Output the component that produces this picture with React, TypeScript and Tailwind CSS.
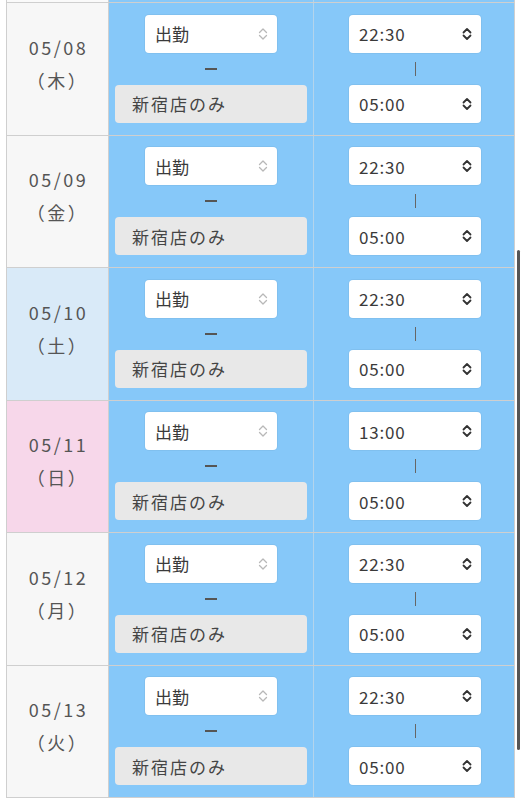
import React from 'react';

type Row = { date: string; dow: string; start: string; end: string; kind?: 'sat' | 'sun' };

const rows: Row[] = [
  { date: '05/08', dow: '木', start: '22:30', end: '05:00' },
  { date: '05/09', dow: '金', start: '22:30', end: '05:00' },
  { date: '05/10', dow: '土', start: '22:30', end: '05:00', kind: 'sat' },
  { date: '05/11', dow: '日', start: '13:00', end: '05:00', kind: 'sun' },
  { date: '05/12', dow: '月', start: '22:30', end: '05:00' },
  { date: '05/13', dow: '火', start: '22:30', end: '05:00' },
];

const Chevrons: React.FC<{ light?: boolean }> = ({ light }) => (
  <svg width="12" height="16" viewBox="0 0 12 16" fill="none" className={light ? 'text-[#b8b8b8]' : 'text-[#333]'}>
    <path d="M2.5 6.5 L6 3 L9.5 6.5" stroke="currentColor" strokeWidth={light ? 1.3 : 1.8} strokeLinecap="round" strokeLinejoin="round" />
    <path d="M2.5 9.5 L6 13 L9.5 9.5" stroke="currentColor" strokeWidth={light ? 1.3 : 1.8} strokeLinecap="round" strokeLinejoin="round" />
  </svg>
);

const SelectBox: React.FC<{ value: string; light?: boolean }> = ({ value, light }) => (
  <div className="w-[132px] h-[38px] bg-white rounded-[4px] flex items-center justify-between pl-[10px] pr-[8px] shadow-[0_0_0_1px_rgba(0,0,0,0.04)]">
    <span className={`text-[17px] text-[#3a3a3a] ${light ? '' : 'tracking-[0.8px]'}`}>{value}</span>
    <Chevrons light={light} />
  </div>
);

export default function App() {
  return (
    <div className="relative w-[525px] h-[800px] overflow-hidden bg-white" style={{ fontFamily: '"Noto Sans CJK JP", "Noto Sans", sans-serif' }}>
      <div className="ml-[6px] w-[509px] border-l border-r border-[#cfcfcf]">
        <div className="grid grid-cols-[102px_205px_1fr] h-[3px] border-b border-[#cfcfcf]">
          <div className="bg-[#fafafa] border-r border-[#cfcfcf]" />
          <div className="bg-[#86c8f9] border-r border-[#b3d4ec]" />
          <div className="bg-[#86c8f9]" />
        </div>
        {rows.map((r) => (
          <div key={r.date} className="grid grid-cols-[102px_205px_1fr] h-[132.5px] border-b border-[#cfcfcf]">
            <div
              className={`flex flex-col items-center justify-center pb-[10px] text-[#555] text-[18px] leading-[33px] tracking-[2.5px] border-r border-[#cfcfcf] ${
                r.kind === 'sat' ? 'bg-[#d9eaf8]' : r.kind === 'sun' ? 'bg-[#f7d7ea]' : 'bg-[#f7f7f7]'
              }`}
            >
              <span className="pl-[2px]">{r.date}</span>
              <span>（{r.dow}）</span>
            </div>
            <div className="bg-[#86c8f9] flex flex-col items-center justify-center border-r border-[#b3d4ec]">
              <SelectBox value="出勤" light />
              <div className="h-[32px] flex items-center justify-center">
                <div className="w-[12px] h-[2px] bg-[#555]" />
              </div>
              <div className="w-[192px] h-[38px] bg-[#e8e8e8] rounded-[4px] flex items-center pl-[17px] text-[17px] text-[#444] tracking-[2px]">
                新宿店のみ
              </div>
            </div>
            <div className="bg-[#86c8f9] flex flex-col items-center justify-center pl-[2px]">
              <SelectBox value={r.start} />
              <div className="h-[32px] flex items-center justify-center">
                <div className="w-px h-[14px] bg-[#666]" />
              </div>
              <SelectBox value={r.end} />
            </div>
          </div>
        ))}
      </div>
      <div className="absolute right-[5px] top-[250px] w-[3px] h-[500px] rounded-full bg-[#555]" />
    </div>
  );
}
